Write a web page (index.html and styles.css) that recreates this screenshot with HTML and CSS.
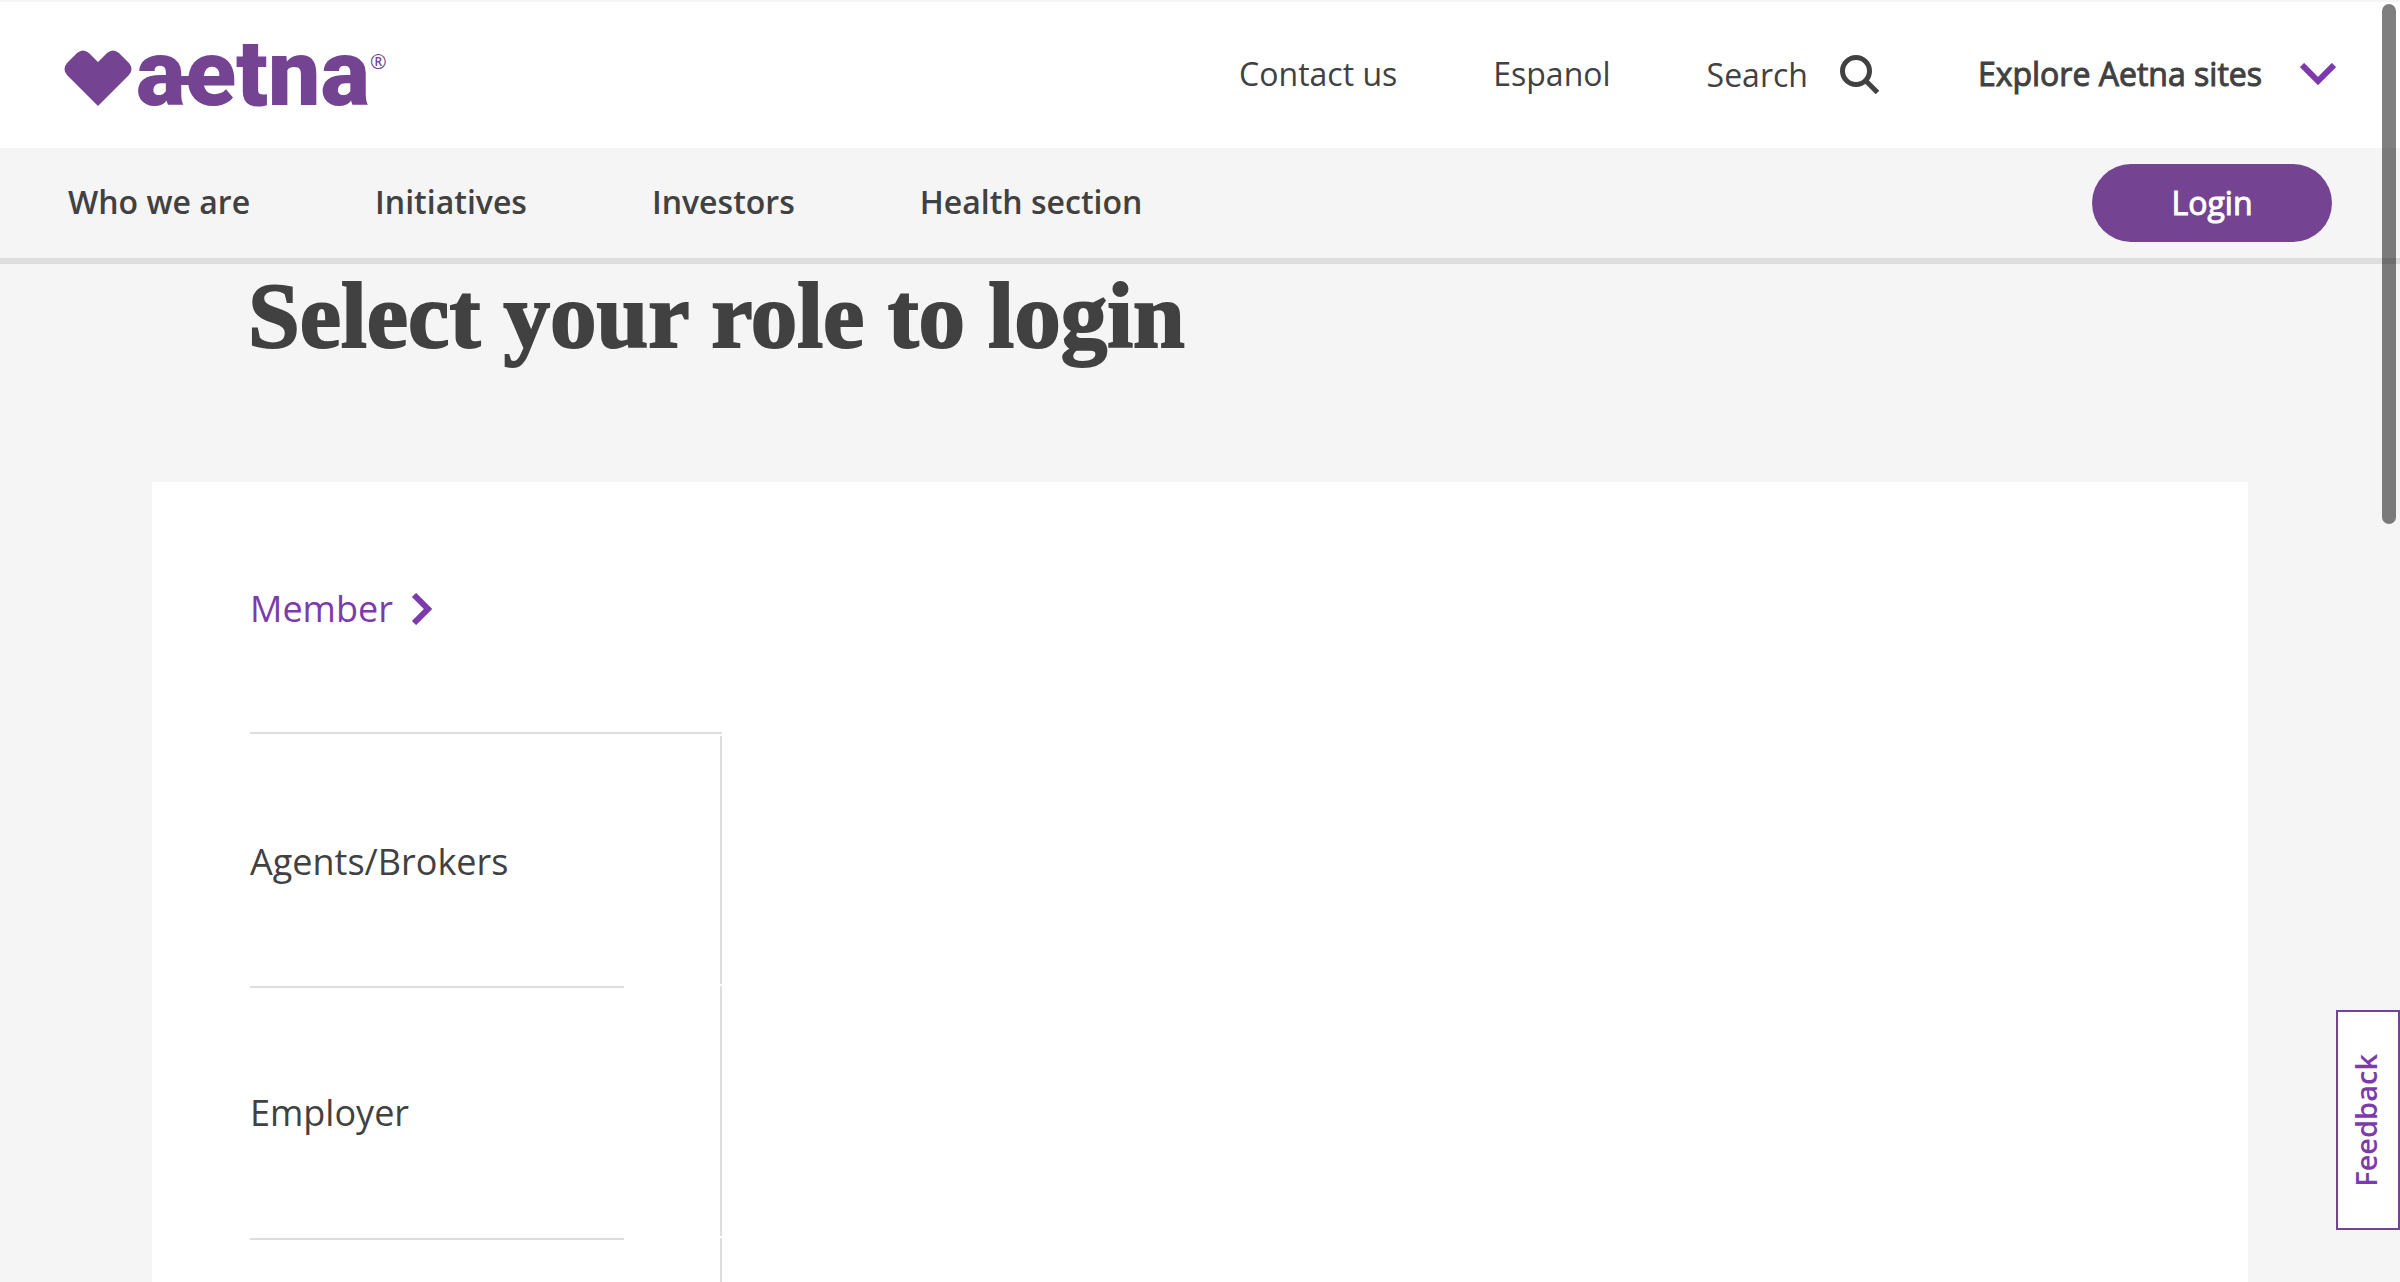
FILE: index.html
```html
<!DOCTYPE html>
<html lang="en">
<head>
<meta charset="utf-8">
<meta name="viewport" content="width=device-width, initial-scale=1">
<title>Select your role to login | Aetna</title>
<link rel="stylesheet" href="styles.css">
</head>
<body>
<header class="site-header">
  <div class="top-bar">
    <a class="logo" href="#" aria-label="Aetna home">
      <svg class="logo-heart" viewBox="0 0 68 56" aria-hidden="true"><path d="M13 3Q19-2 25 3L34 12L43 3Q49-2 55 3L65 13Q70 19 65 25L34 56L3 25Q-2 19 3 13Z"/></svg>
      <span class="logo-word">aetna</span><span class="logo-mark">®</span>
    </a>
    <div class="utility">
      <a href="#">Contact us</a>
      <a href="#">Espanol</a>
      <button class="search" type="button">Search
        <svg class="search-icon" viewBox="0 0 40 40" aria-hidden="true"><circle cx="16" cy="16" r="13.5"/><path d="M25.500 25.500L37.500 37.500"/></svg>
      </button>
      <button class="explore" type="button">Explore Aetna sites
        <svg class="chevron-down" viewBox="0 0 36 22" aria-hidden="true"><path d="M2 2L18 18L34 2"/></svg>
      </button>
    </div>
  </div>
  <nav class="main-nav" aria-label="Main">
    <a href="#">Who we are</a>
    <a href="#">Initiatives</a>
    <a href="#">Investors</a>
    <a href="#">Health section</a>
    <button class="login" type="button">Login</button>
  </nav>
</header>
<main>
  <h1>Select your role to login</h1>
  <section class="card">
    <ul class="roles">
      <li class="role active"><a href="#">Member
        <svg class="chevron-right" viewBox="0 0 22 32" aria-hidden="true"><path d="M3 2L17 16L3 30"/></svg></a></li>
      <li class="role"><a href="#">Agents/Brokers</a></li>
      <li class="role ruled"><a href="#">Employer</a></li>
      <li class="role ruled"></li>
    </ul>
  </section>
</main>
<button class="feedback" type="button">Feedback</button>
<div class="scroll-thumb" aria-hidden="true"></div>
</body>
</html>
```
FILE: styles.css
```css
* { box-sizing: border-box; }
html { height: 100%; }
body {
  display: flex;
  flex-direction: column;
  margin: 0;
  height: 100%;
  overflow: hidden;
  background: #f5f5f5;
  color: #414141;
  font-family: "Open Sans", "Noto Sans", sans-serif;
  font-size: 32px;
  line-height: 44px;
}
a { color: inherit; text-decoration: none; }
button {
  margin: 0;
  padding: 0;
  border: 0;
  background: none;
  color: inherit;
  font: inherit;
  cursor: pointer;
}
svg { flex: none; fill: none; stroke: currentColor; }

.site-header { flex: none; border-bottom: 6px solid #ddd; }
.top-bar {
  display: flex;
  align-items: center;
  justify-content: space-between;
  height: 148px;
  padding: 0 64px;
  border-top: 2px solid #f5f5f5;
  background: #fff;
}
.logo { display: flex; align-items: center; padding-top: 6px; color: #744492; }
.logo-heart { width: 68px; height: 56px; fill: currentColor; stroke: none; }
.logo-word {
  position: relative;
  margin-left: 4px;
  padding-bottom: 8px;
  font-family: Roboto, sans-serif;
  font-weight: 900;
  font-size: 93px;
  line-height: 92px;
}
/* bar that ties the "a" to the "e" */
.logo-word::after {
  content: "";
  position: absolute;
  left: 40px;
  top: 48px;
  width: 16px;
  height: 9px;
  background: currentColor;
}
.logo-mark { padding-bottom: 32px; font-size: 20px; line-height: 20px; }

.utility { display: flex; align-items: center; gap: 96px; }
.utility a, .explore { padding-bottom: 2px; }
.search, .explore { display: flex; align-items: center; }
.search { gap: 32px; padding-right: 2px; }
.explore { gap: 38px; -webkit-text-stroke: 1px currentColor; }
.search-icon { width: 40px; height: 40px; stroke-width: 5; }
.chevron-down { width: 36px; height: 22px; color: #7d3aac; stroke-width: 6; }

.main-nav {
  display: flex;
  align-items: center;
  gap: 125px;
  height: 110px;
  padding: 0 68px;
  font-weight: 600;
}
.main-nav a { padding-bottom: 2px; }
.login {
  width: 240px;
  height: 78px;
  margin-left: auto;
  border-radius: 39px;
  background: #744492;
  color: #fff;
  font-weight: 400;
  -webkit-text-stroke: 1px currentColor;
}

main { display: flex; flex-direction: column; flex: 1; min-height: 0; padding: 0 152px; }
h1 {
  flex: none;
  margin: 0;
  padding: 0 96px;
  height: 218px;
  font-family: "Liberation Serif", serif;
  font-weight: 700;
  font-size: 93px;
  line-height: 104px;
  -webkit-text-stroke: 2px currentColor;
}
.card {
  flex: 1;
  min-height: 0;
  overflow: hidden;
  padding: 0 98px;
  background: #fff;
}
.roles {
  display: flex;
  flex-direction: column;
  gap: 2px;
  max-width: 472px;
  margin: 0;
  padding: 0;
  list-style: none;
  font-size: 36px;
  line-height: 48px;
}
.role { display: flex; height: 248px; border-right: 2px solid #ddd; }
.role a { display: flex; align-items: center; gap: 18px; padding-top: 4px; }
.role.active {
  height: 252px;
  border-right: 0;
  border-bottom: 2px solid #ddd;
  color: #7d3aac;
}
.role.ruled {
  height: 250px;
  background: linear-gradient(#ddd, #ddd) left top / 374px 2px no-repeat;
}
.chevron-right { width: 22px; height: 32px; stroke-width: 6; }

.feedback {
  position: fixed;
  right: 0;
  top: 1010px;
  width: 64px;
  height: 220px;
  padding-right: 4px;
  border: 2px solid #744492;
  background: #fff;
  color: #7d3aac;
  font-size: 29px;
  font-weight: 600;
  line-height: 56px;
  writing-mode: sideways-lr;
}
.scroll-thumb {
  position: fixed;
  top: 4px;
  right: 4px;
  width: 14px;
  height: 520px;
  border-radius: 7px;
  background: rgba(0, 0, 0, .5);
}
```
